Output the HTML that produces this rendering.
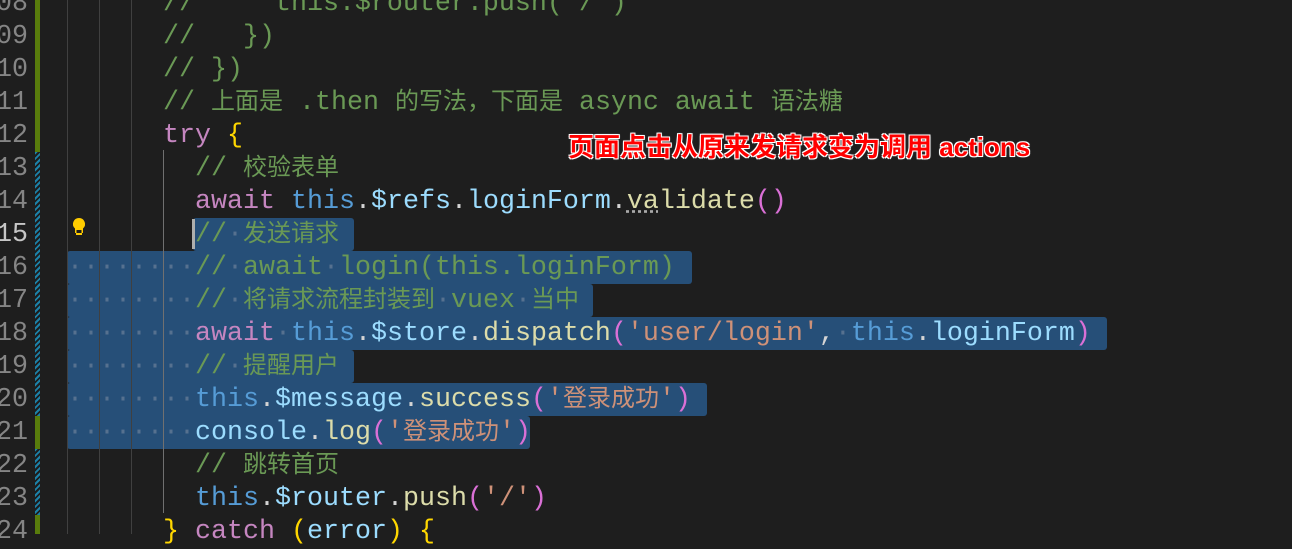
<!DOCTYPE html>
<html><head><meta charset="utf-8"><style>
body{margin:0;width:1292px;height:534px;overflow:hidden;background:#1e1e1e;position:relative;font-family:"Liberation Mono","Noto Sans CJK SC",monospace;font-size:26.67px;}
.l{position:absolute;left:67px;height:33px;line-height:33px;white-space:pre;color:#d4d4d4}
.n{position:absolute;right:1264px;height:33px;line-height:33px;color:#858585;white-space:pre}
.c{font-size:24px;font-family:"Noto Sans CJK SC",sans-serif;line-height:0}
.cm{color:#6a9955}.k{color:#c586c0}.t{color:#569cd6}.p{color:#9cdcfe}.f{color:#dcdcaa}.s{color:#ce9178}
.y{color:#ffd700}.m{color:#da70d6}.d{color:#56718f}
.sel{position:absolute;background:#264f78;height:33px;border-radius:3px}
.g{position:absolute;width:1px;background:#404040}
.bar{position:absolute;left:35px;width:5px}
.gr{background:#587c0c}
.bl{background:repeating-linear-gradient(135deg,#1b81a8 0 2px,#1e1e1e 2px 4px)}
</style></head><body>
<div class="bar gr" style="top:0;height:152px"></div>
<div class="bar bl" style="top:152px;height:264px"></div>
<div class="bar gr" style="top:416px;height:33px"></div>
<div class="bar bl" style="top:449px;height:66px"></div>
<div class="bar gr" style="top:515px;height:19px"></div>

<div class="sel" style="left:193px;top:218px;width:161px"></div>
<div class="sel" style="left:67px;top:251px;width:625px"></div>
<div class="sel" style="left:67px;top:284px;width:526px"></div>
<div class="sel" style="left:67px;top:317px;width:1040px"></div>
<div class="sel" style="left:67px;top:350px;width:287px"></div>
<div class="sel" style="left:67px;top:383px;width:640px"></div>
<div class="sel" style="left:67px;top:416px;width:463px"></div>

<div class="g" style="left:67px;top:0;height:534px"></div>
<div class="g" style="left:99px;top:0;height:534px"></div>
<div class="g" style="left:131px;top:0;height:534px"></div>
<div class="g" style="left:163px;top:150px;height:363px;background:#707070"></div>
<div style="position:absolute;left:192px;top:219px;width:3px;height:30px;background:#aeafad"></div>
<svg style="position:absolute;left:71px;top:217px" width="16" height="20" viewBox="0 0 16 20"><path d="M8 1a6 6 0 0 0-4 10.5V16h8v-4.5A6 6 0 0 0 8 1z" fill="#ffcc00"/><rect x="5.5" y="13" width="5" height="3" fill="#1e1e1e"/><rect x="5" y="16" width="6" height="2" fill="#ffcc00"/></svg>

<div class="n" style="top:-12px">108</div>
<div class="n" style="top:21px">109</div>
<div class="n" style="top:54px">110</div>
<div class="n" style="top:87px">111</div>
<div class="n" style="top:120px">112</div>
<div class="n" style="top:153px">113</div>
<div class="n" style="top:186px">114</div>
<div class="n" style="top:219px;color:#c6c6c6">115</div>
<div class="n" style="top:252px">116</div>
<div class="n" style="top:285px">117</div>
<div class="n" style="top:318px">118</div>
<div class="n" style="top:351px">119</div>
<div class="n" style="top:384px">120</div>
<div class="n" style="top:417px">121</div>
<div class="n" style="top:450px">122</div>
<div class="n" style="top:483px">123</div>
<div class="n" style="top:516px">124</div>

<div class="l cm" style="top:-12px">      //     this.$router.push('/')</div>
<div class="l cm" style="top:21px">      //   })</div>
<div class="l cm" style="top:54px">      // })</div>
<div class="l cm" style="top:87px">      // <span class="c">上面是</span> .then <span class="c">的写法，下面是</span> async await <span class="c">语法糖</span></div>
<div class="l" style="top:120px">      <span class="k">try</span> <span class="y">{</span></div>
<div class="l cm" style="top:153px">        // <span class="c">校验表单</span></div>
<div class="l" style="top:186px">        <span class="k">await</span> <span class="t">this</span>.<span class="p">$refs</span>.<span class="p">loginForm</span>.<span class="f" style="text-decoration:underline dotted #aaa">va</span><span class="f">lidate</span><span class="m">()</span></div>
<div class="l cm" style="top:219px">        //<span class="d">·</span><span class="c">发送请求</span></div>
<div class="l cm" style="top:252px"><span class="d">········</span>//<span class="d">·</span>await<span class="d">·</span>login(this.loginForm)</div>
<div class="l cm" style="top:285px"><span class="d">········</span>//<span class="d">·</span><span class="c">将请求流程封装到</span><span class="d">·</span>vuex<span class="d">·</span><span class="c">当中</span></div>
<div class="l" style="top:318px"><span class="d">········</span><span class="k">await</span><span class="d">·</span><span class="t">this</span>.<span class="p">$store</span>.<span class="f">dispatch</span><span class="m">(</span><span class="s">'user/login'</span>,<span class="d">·</span><span class="t">this</span>.<span class="p">loginForm</span><span class="m">)</span></div>
<div class="l cm" style="top:351px"><span class="d">········</span>//<span class="d">·</span><span class="c">提醒用户</span></div>
<div class="l" style="top:384px"><span class="d">········</span><span class="t">this</span>.<span class="p">$message</span>.<span class="f">success</span><span class="m">(</span><span class="s">'<span class="c">登录成功</span>'</span><span class="m">)</span></div>
<div class="l" style="top:417px"><span class="d">········</span><span class="p">console</span>.<span class="f">log</span><span class="m">(</span><span class="s">'<span class="c">登录成功</span>'</span><span class="m">)</span></div>
<div class="l cm" style="top:450px">        // <span class="c">跳转首页</span></div>
<div class="l" style="top:483px">        <span class="t">this</span>.<span class="p">$router</span>.<span class="f">push</span><span class="m">(</span><span class="s">'/'</span><span class="m">)</span></div>
<div class="l" style="top:516px">      <span class="y">}</span> <span class="k">catch</span> <span class="y">(</span><span class="p">error</span><span class="y">)</span> <span class="y">{</span></div>

<div style="position:absolute;left:568px;top:129px;white-space:nowrap;font-family:'Liberation Sans','Noto Sans CJK SC',sans-serif;font-weight:bold;font-size:26px;line-height:36px;color:#ff0000;text-shadow:0 0 2px #fff,1px 1px 0 #fff,-1px -1px 0 #fff,1px -1px 0 #fff,-1px 1px 0 #fff">页面点击从原来发请求变为调用 actions</div>
</body></html>
